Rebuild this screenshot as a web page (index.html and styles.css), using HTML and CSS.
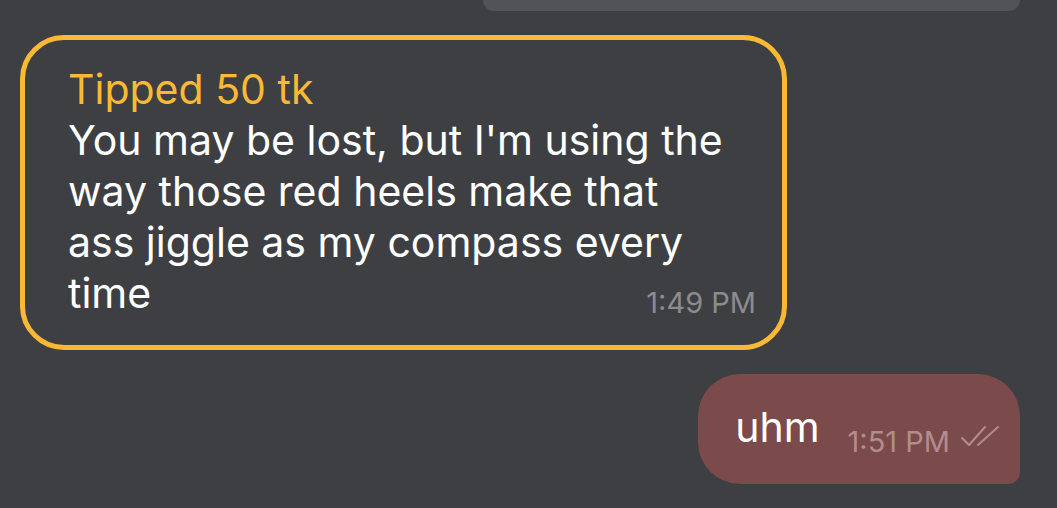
FILE: index.html
```html
<!DOCTYPE html>
<html>
<head>
<meta charset="utf-8">
<link rel="stylesheet" href="styles.css">
</head>
<body>
<div class="chat">
  <div class="prev-bubble"></div>
  <div class="tip-bubble">
    <div class="tip-label">Tipped 50 tk</div>
    <div class="tip-text">
      <div class="line">You may be lost, but I'm using the</div>
      <div class="line">way those red heels make that</div>
      <div class="line">ass jiggle as my compass every</div>
      <div class="line last"><span>time</span><span class="time">1:49 PM</span></div>
    </div>
  </div>
  <div class="out-bubble">
    <span class="out-text">uhm</span>
    <span class="out-time">1:51 PM</span>
    <svg class="checks" width="42" height="24" viewBox="0 0 42 24">
      <path d="M2 13 L9 20 L25 2" fill="none" stroke="#b18d8d" stroke-width="2" stroke-linecap="round" stroke-linejoin="round"/>
      <path d="M18 20 L38 2" fill="none" stroke="#b18d8d" stroke-width="2" stroke-linecap="round"/>
    </svg>
  </div>
</div>
</body>
</html>
```

FILE: styles.css
```css
html, body {
  margin: 0;
  padding: 0;
  background: #3e3f42;
}
body {
  width: 1057px;
  height: 508px;
  overflow: hidden;
  font-family: Inter, "Noto Sans", sans-serif;
}
.chat {
  display: flex;
  flex-direction: column;
}
.prev-bubble {
  align-self: flex-end;
  width: 537px;
  height: 11px;
  margin-right: 37px;
  background: #525357;
  border-radius: 0 0 22px 22px;
}
.tip-bubble {
  align-self: flex-start;
  box-sizing: border-box;
  width: 767px;
  height: 315px;
  margin: 24px 0 0 20px;
  border: 5px solid #f9b935;
  border-radius: 44px;
  padding: 24px 26px 0 43px;
}
.tip-label {
  color: #f9b935;
  font-size: 41px;
  line-height: 51px;
  white-space: nowrap;
}
.tip-text {
  color: #ffffff;
  font-size: 41px;
  line-height: 51px;
}
.line {
  white-space: nowrap;
}
.line.last {
  display: flex;
  justify-content: space-between;
  align-items: baseline;
}
.time {
  color: #8b8c8f;
  font-size: 29px;
  position: relative;
  top: 5px;
}
.out-bubble {
  align-self: flex-end;
  box-sizing: border-box;
  display: flex;
  align-items: baseline;
  white-space: nowrap;
  height: 110px;
  margin: 24px 37px 0 0;
  padding: 0 18px 0 37px;
  background: #7b4a4b;
  border-radius: 42px 42px 12px 42px;
}
.out-bubble > * {
  flex-shrink: 0;
}
.out-text {
  color: #ffffff;
  font-size: 41px;
  line-height: 110px;
  position: relative;
  top: -2px;
}
.out-time {
  color: #b18d8d;
  font-size: 29px;
  margin-left: 28px;
  position: relative;
  top: 8px;
}
.checks {
  align-self: center;
  margin-left: 10px;
  margin-top: 16px;
}
```
